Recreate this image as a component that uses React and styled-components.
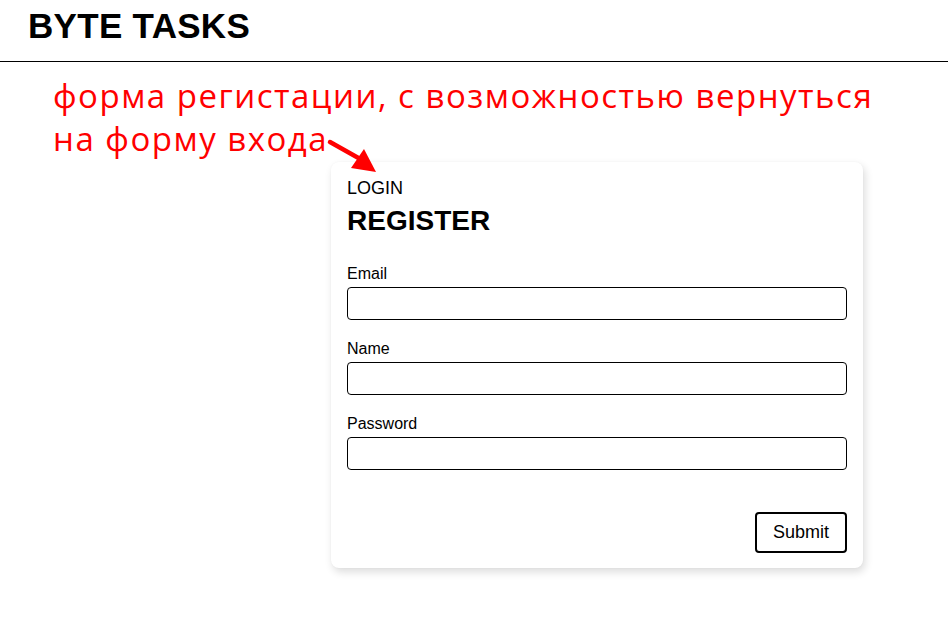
import React from "react";
import styled, { createGlobalStyle } from "styled-components";

const Global = createGlobalStyle`
  html, body { margin: 0; padding: 0; background: #fff; }
  body { font-family: "Liberation Sans", Arial, sans-serif; color: #000; }
  * { box-sizing: border-box; }
`;

const Page = styled.div`
  position: relative;
  width: 948px;
  min-height: 624px;
`;

const Header = styled.header`
  height: 62px;
  border-bottom: 1px solid #000;
  padding: 6px 28px 0;
`;

const Brand = styled.h1`
  margin: 0;
  font-size: 35px;
  font-weight: 700;
  line-height: 40px;
  letter-spacing: 0.3px;
`;

const Main = styled.main`
  padding: 100px 0 40px 331px;
`;

const Card = styled.section`
  width: 532px;
  background: #fff;
  border-radius: 8px;
  box-shadow: 2px 4px 8px rgba(0, 0, 0, 0.14), 0 0 2px rgba(0, 0, 0, 0.04);
  padding: 16px 16px 15px;
  display: flex;
  flex-direction: column;
`;

const TabLink = styled.div`
  font-size: 18px;
  line-height: 21px;
  cursor: pointer;
`;

const Title = styled.h2`
  margin: 6px 0 0;
  font-size: 28px;
  font-weight: 700;
  line-height: 32px;
`;

const Form = styled.form`
  display: flex;
  flex-direction: column;
  gap: 20px;
  margin-top: 28px;
`;

const Field = styled.label`
  display: flex;
  flex-direction: column;
  gap: 4px;
  font-size: 16px;
  line-height: 18px;
`;

const Input = styled.input`
  height: 33px;
  width: 100%;
  border: 1px solid #000;
  border-radius: 4px;
  padding: 0 8px;
  font: inherit;
  outline: none;
`;

const Actions = styled.div`
  display: flex;
  justify-content: flex-end;
  margin-top: 42px;
`;

const Button = styled.button`
  height: 41px;
  padding: 0 16px;
  border: 2px solid #000;
  border-radius: 4px;
  background: #fff;
  font-family: "Liberation Sans", Arial, sans-serif;
  font-size: 18px;
  color: #000;
`;

const Note = styled.div`
  position: absolute;
  left: 53px;
  top: 74px;
  color: #ff0000;
  font-family: "Open Sans", "Noto Sans", sans-serif;
  font-size: 33px;
  line-height: 43px;
  letter-spacing: 1.5px;
  pointer-events: none;
`;

const Arrow = styled.svg`
  position: absolute;
  left: 326px;
  top: 136px;
`;

const fields = [
  { label: "Email", type: "email" },
  { label: "Name", type: "text" },
  { label: "Password", type: "password" },
];

export default function App() {
  return (
    <Page>
      <Global />
      <Header>
        <Brand>BYTE TASKS</Brand>
      </Header>
      <Main>
        <Card>
          <TabLink>LOGIN</TabLink>
          <Title>REGISTER</Title>
          <Form onSubmit={(e) => e.preventDefault()}>
            {fields.map((f) => (
              <Field key={f.label}>
                {f.label}
                <Input type={f.type} />
              </Field>
            ))}
          </Form>
          <Actions>
            <Button type="button">Submit</Button>
          </Actions>
        </Card>
      </Main>
      <Note>
        форма регистации, с возможностью вернуться
        <br />
        на форму входа
      </Note>
      <Arrow width="56" height="40" viewBox="0 0 56 40">
        <line x1="4" y1="6" x2="36" y2="24" stroke="#ff0000" strokeWidth="4.5" strokeLinecap="round" />
        <polygon points="50,36 25,32 38,13" fill="#ff0000" />
      </Arrow>
    </Page>
  );
}
